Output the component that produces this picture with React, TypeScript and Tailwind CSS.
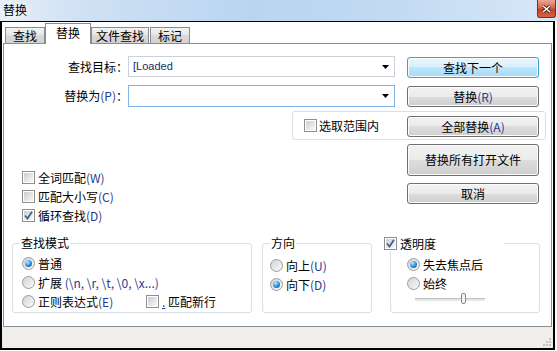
import type { ReactNode } from 'react';

function Mn({ children }: { children: ReactNode }) {
  return <span className="text-[#1f3a93]">{children}</span>;
}

function CheckBox({ checked = false }: { checked?: boolean }) {
  return (
    <span className="relative flex h-[13px] w-[13px] shrink-0 border border-[#8e8f8f] bg-white p-[1px]">
      <span className="h-full w-full bg-[linear-gradient(135deg,#cbcfd4,#f7f7f7)]" />
      {checked && (
        <svg className="absolute left-[1px] top-[1px]" width="9" height="9" viewBox="0 0 9 9">
          <path d="M1 4.5 L3.5 7.5 L8 0.8" fill="none" stroke="#4a5e8c" strokeWidth="1.8" />
        </svg>
      )}
    </span>
  );
}

function Radio({ checked = false }: { checked?: boolean }) {
  return (
    <span className="flex h-[13px] w-[13px] shrink-0 items-center justify-center rounded-full border border-[#9b9b9b] bg-[linear-gradient(135deg,#d0d3d7,#fbfbfb)]">
      {checked && (
        <span className="h-[7px] w-[7px] rounded-full bg-[radial-gradient(circle_at_35%_30%,#c2e8ff,#2b8ad8_55%,#0d4f94)]" />
      )}
    </span>
  );
}

function Btn({ children, primary = false, className = '' }: { children: ReactNode; primary?: boolean; className?: string }) {
  return (
    <div
      className={`flex w-[132px] shrink-0 items-center justify-center rounded-[3px] border shadow-[inset_0_0_0_1px_#fcfcfc] ${
        primary
          ? 'border-[#3c9fd6] bg-[linear-gradient(#eaf6fd,#d9f0fc_50%,#bee6fd_50%,#a7d9f5)]'
          : 'border-[#707070] bg-[linear-gradient(#f2f2f2,#ebebeb_50%,#dddddd_50%,#cfcfcf)]'
      } ${className}`}
    >
      {children}
    </div>
  );
}

function Group({ title, className = '', children }: { title?: ReactNode; className?: string; children: ReactNode }) {
  return (
    <div className={`relative rounded-[3px] border border-[#d5dfe5] ${className}`}>
      {title && <span className="absolute left-[7px] top-[-8px] bg-white px-[1px] leading-[14px]">{title}</span>}
      {children}
    </div>
  );
}

function Row({ children, className = '' }: { children: ReactNode; className?: string }) {
  return <div className={`flex h-[19px] items-center gap-[3px] ${className}`}>{children}</div>;
}

function Arrow() {
  return (
    <svg width="7" height="4" viewBox="0 0 7 4">
      <path d="M0 0 H7 L3.5 4 Z" fill="#000" />
    </svg>
  );
}

export default function App() {
  return (
    <div className="h-[351px] w-[557px] overflow-hidden bg-white font-['Noto_Sans_CJK_SC',sans-serif] text-[12px] leading-none text-black">
      {/* 标题栏 */}
      <div className="flex h-[21px] items-start justify-between bg-[linear-gradient(90deg,#e6eef8,#cfe1f4_15%,#bad5f0_45%,#c2daf2_70%,#d8e8f8)]">
        <span className="ml-[3px] mt-[3px] text-[12px] leading-[14px] [text-shadow:0_0_6px_#fff,0_0_10px_#fff]">替换</span>
        <div className="mr-[1px] flex h-[18px] w-[19px] items-center justify-center rounded-b-[3px] border border-t-0 border-[#7a2d1f] bg-[linear-gradient(#eaa896,#d8684c_45%,#c2432a_55%,#d5633f)]">
          <svg width="9" height="8" viewBox="0 0 9 8">
            <path d="M1 1 L8 7 M8 1 L1 7" stroke="#3b1a12" strokeWidth="3" />
            <path d="M1 1 L8 7 M8 1 L1 7" stroke="#fff" strokeWidth="1.6" />
          </svg>
        </div>
      </div>

      {/* 窗口 */}
      <div className="flex h-[329px] w-[555px] flex-col border-x-2 border-t border-b-2 border-black">
        {/* 标签页 */}
        <div className="flex h-[21px] items-end pl-[3px]">
          <div className="flex h-[16px] w-[40px] items-center justify-center border border-b-0 border-[#898c95] bg-[linear-gradient(#f3f3f3,#e6e6e6_50%,#dadada_50%,#d2d2d2)]">查找</div>
          <div className="relative z-10 -mb-px flex h-[21px] w-[46px] items-center justify-center border border-b-0 border-[#898c95] bg-white pb-[2px]">替换</div>
          <div className="flex h-[16px] w-[58px] items-center justify-center border border-b-0 border-[#898c95] bg-[linear-gradient(#f3f3f3,#e6e6e6_50%,#dadada_50%,#d2d2d2)]">文件查找</div>
          <div className="ml-[1px] flex h-[16px] w-[40px] items-center justify-center border border-b-0 border-[#898c95] bg-[linear-gradient(#f3f3f3,#e6e6e6_50%,#dadada_50%,#d2d2d2)]">标记</div>
        </div>

        <div className="ml-[1px] flex h-[284px] w-[549px] flex-col border border-[#898c95] bg-white">
          {/* 查找目标 */}
          <div className="mt-[12px] flex h-[21px]">
            <div className="w-[124px] text-right leading-[21px]">查找目标：</div>
            <div className="flex h-[21px] w-[267px] items-center justify-between border border-[#ccd1d9] pl-[4px] pr-[5px]">
              <span className="font-['Liberation_Sans',sans-serif] text-[11px] text-[#1c2b5c]">[Loaded</span>
              <Arrow />
            </div>
            <Btn primary className="ml-[12px] mt-px h-[21px]">查找下一个</Btn>
          </div>

          {/* 替换为 */}
          <div className="mt-[8px] flex h-[22px]">
            <div className="w-[124px] text-right leading-[22px]">
              替换为<Mn>(P)</Mn>：
            </div>
            <div className="flex h-[22px] w-[267px] items-center justify-end border border-[#7eb4ea] pr-[5px]">
              <Arrow />
            </div>
            <Btn className="ml-[12px] mt-px h-[21px]">
              替换<Mn>(R)</Mn>
            </Btn>
          </div>

          {/* 选取范围内 */}
          <div className="ml-[288px] mt-[4px] flex h-[29px] w-[254px] items-center justify-between rounded-[3px] border border-[#d5dfe5] pl-[11px] pr-[6px]">
            <div className="flex items-center gap-[2px]">
              <CheckBox />
              <span>选取范围内</span>
            </div>
            <Btn className="mt-[2px] h-[21px]">
              全部替换<Mn>(A)</Mn>
            </Btn>
          </div>

          {/* 选项 + 按钮 */}
          <div className="mt-[4px] flex justify-between">
            <div className="flex flex-col pl-[18px] pt-[24px]">
              <Row>
                <CheckBox />
                <span>
                  全词匹配<Mn>(W)</Mn>
                </span>
              </Row>
              <Row>
                <CheckBox />
                <span>
                  匹配大小写<Mn>(C)</Mn>
                </span>
              </Row>
              <Row>
                <CheckBox checked />
                <span>
                  循环查找<Mn>(D)</Mn>
                </span>
              </Row>
            </div>
            <div className="mr-[12px] flex flex-col">
              <Btn className="h-[32px]">替换所有打开文件</Btn>
              <Btn className="mt-[7px] h-[21px]">取消</Btn>
            </div>
          </div>

          {/* 分组 */}
          <div className="mt-[18px] flex h-[70px]">
            <Group title="查找模式" className="ml-[8px] w-[240px]">
              <div className="flex flex-col pl-[9px] pt-[10px]">
                <Row>
                  <Radio checked />
                  <span>普通</span>
                </Row>
                <Row>
                  <Radio />
                  <span>
                    扩展 <Mn>{'(\\n, \\r, \\t, \\0, \\x...)'}</Mn>
                  </span>
                </Row>
                <Row className="gap-0">
                  <div className="flex w-[121px] items-center gap-[3px]">
                    <Radio />
                    <span>
                      正则表达式<Mn>(E)</Mn>
                    </span>
                  </div>
                  <div className="flex items-center gap-[3px]">
                    <CheckBox />
                    <span>
                      <Mn>
                        <span className="underline">.</span>
                      </Mn>{' '}
                      匹配新行
                    </span>
                  </div>
                </Row>
              </div>
            </Group>

            <Group title="方向" className="ml-[10px] w-[110px]">
              <div className="flex flex-col pl-[7px] pt-[12px]">
                <Row>
                  <Radio />
                  <span>
                    向上<Mn>(U)</Mn>
                  </span>
                </Row>
                <Row>
                  <Radio checked />
                  <span>
                    向下<Mn>(D)</Mn>
                  </span>
                </Row>
              </div>
            </Group>

            <div className="relative ml-[18px] w-[150px] rounded-[3px] border border-[#d5dfe5]">
              <div className="absolute left-[-7px] top-[-8px] flex h-[15px] w-[120px] items-center gap-[3px] bg-white">
                <CheckBox checked />
                <span>透明度</span>
              </div>
              <div className="flex flex-col pl-[16px] pt-[11px]">
                <Row>
                  <Radio checked />
                  <span>失去焦点后</span>
                </Row>
                <Row>
                  <Radio />
                  <span>始终</span>
                </Row>
                <div className="flex h-[12px] items-center pl-[8px]">
                  <div className="relative h-[3px] w-[70px] border-t border-[#bdbdbd] bg-[#e6e8e8]">
                    <span className="absolute left-[46px] top-[-6px] h-[11px] w-[5px] rounded-[2px] border border-[#8a8a8a] bg-[#f2f2f2]" />
                  </div>
                </div>
              </div>
            </div>
          </div>
        </div>

        {/* 底部状态栏 */}
        <div className="relative h-[21px] bg-[#f0edea]">
          <svg className="absolute bottom-[1px] right-[1px]" width="10" height="10" viewBox="0 0 10 10">
            <rect x="7" y="1" width="2" height="2" fill="#c8c4bf" />
            <rect x="4" y="4" width="2" height="2" fill="#c8c4bf" />
            <rect x="7" y="4" width="2" height="2" fill="#c8c4bf" />
            <rect x="1" y="7" width="2" height="2" fill="#c8c4bf" />
            <rect x="4" y="7" width="2" height="2" fill="#c8c4bf" />
            <rect x="7" y="7" width="2" height="2" fill="#c8c4bf" />
          </svg>
        </div>
      </div>
    </div>
  );
}
